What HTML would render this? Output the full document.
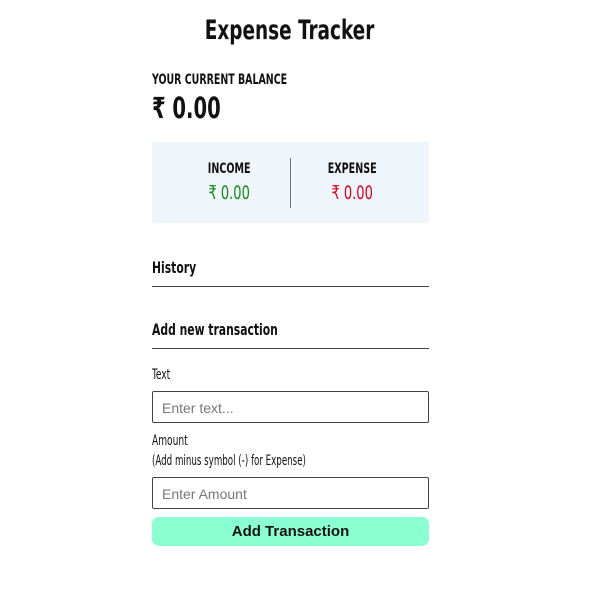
<!DOCTYPE html>
<html><head><style>
body{margin:0;width:600px;height:603px;background:#fff;position:relative;font-family:"DejaVu Sans Condensed","Liberation Sans",sans-serif;color:#111;overflow:hidden}
.a{position:absolute;white-space:nowrap;line-height:1}
.n{display:inline-block;transform:scaleX(.75);transform-origin:left center}
.c{display:inline-block;transform:scaleX(.76);transform-origin:center center}
.line{position:absolute;left:152px;width:277px;height:1px;background:#444}
.inp{position:absolute;left:152px;width:275px;height:30px;border:1px solid #444;border-radius:2px;background:#fff;font-family:"Liberation Sans",sans-serif;font-size:14px;color:#777;box-sizing:content-box}
.inp span{position:absolute;left:9px;top:8px}
</style></head><body>
<div class="a" style="left:0;width:580px;text-align:center;top:17px;font-size:27px;font-weight:bold"><span class="c">Expense Tracker</span></div>
<div class="a" style="left:152px;top:73px;font-size:14px;font-weight:bold"><span class="n">YOUR CURRENT BALANCE</span></div>
<div class="a" style="left:152px;top:94px;font-size:29px;font-weight:bold"><span class="n">₹ 0.00</span></div>
<div style="position:absolute;left:152px;top:142px;width:277px;height:81px;background:#eef6fc"></div>
<div style="position:absolute;left:290px;top:158px;width:1px;height:50px;background:#777"></div>
<div class="a" style="left:159px;width:140px;text-align:center;top:162px;font-size:14px;font-weight:bold"><span class="c">INCOME</span></div>
<div class="a" style="left:282px;width:140px;text-align:center;top:162px;font-size:14px;font-weight:bold"><span class="c">EXPENSE</span></div>
<div class="a" style="left:159px;width:140px;text-align:center;top:184px;font-size:19px;color:#1a8a1a"><span class="c">₹ 0.00</span></div>
<div class="a" style="left:282px;width:140px;text-align:center;top:184px;font-size:19px;color:#e0001a"><span class="c">₹ 0.00</span></div>
<div class="a" style="left:152px;top:260px;font-size:16px;font-weight:bold"><span class="n">History</span></div>
<div class="line" style="top:286px"></div>
<div class="a" style="left:152px;top:322px;font-size:16px;font-weight:bold"><span class="n">Add new transaction</span></div>
<div class="line" style="top:348px"></div>
<div class="a" style="left:152px;top:368px;font-size:14px"><span class="n" style="transform:scaleX(.72)">Text</span></div>
<div class="inp" style="top:391px"><span>Enter text...</span></div>
<div class="a" style="left:152px;top:434px;font-size:14px"><span class="n" style="transform:scaleX(.72)">Amount</span></div>
<div class="a" style="left:152px;top:454px;font-size:14px"><span class="n" style="transform:scaleX(.69)">(Add minus symbol (-) for Expense)</span></div>
<div class="inp" style="top:477px"><span>Enter Amount</span></div>
<div style="position:absolute;left:152px;top:517px;width:277px;height:29px;background:#8affd2;border-radius:7px;font-family:'Liberation Sans',sans-serif;font-weight:bold;font-size:15px;text-align:center;line-height:29px;color:#111">Add Transaction</div>
</body></html>
